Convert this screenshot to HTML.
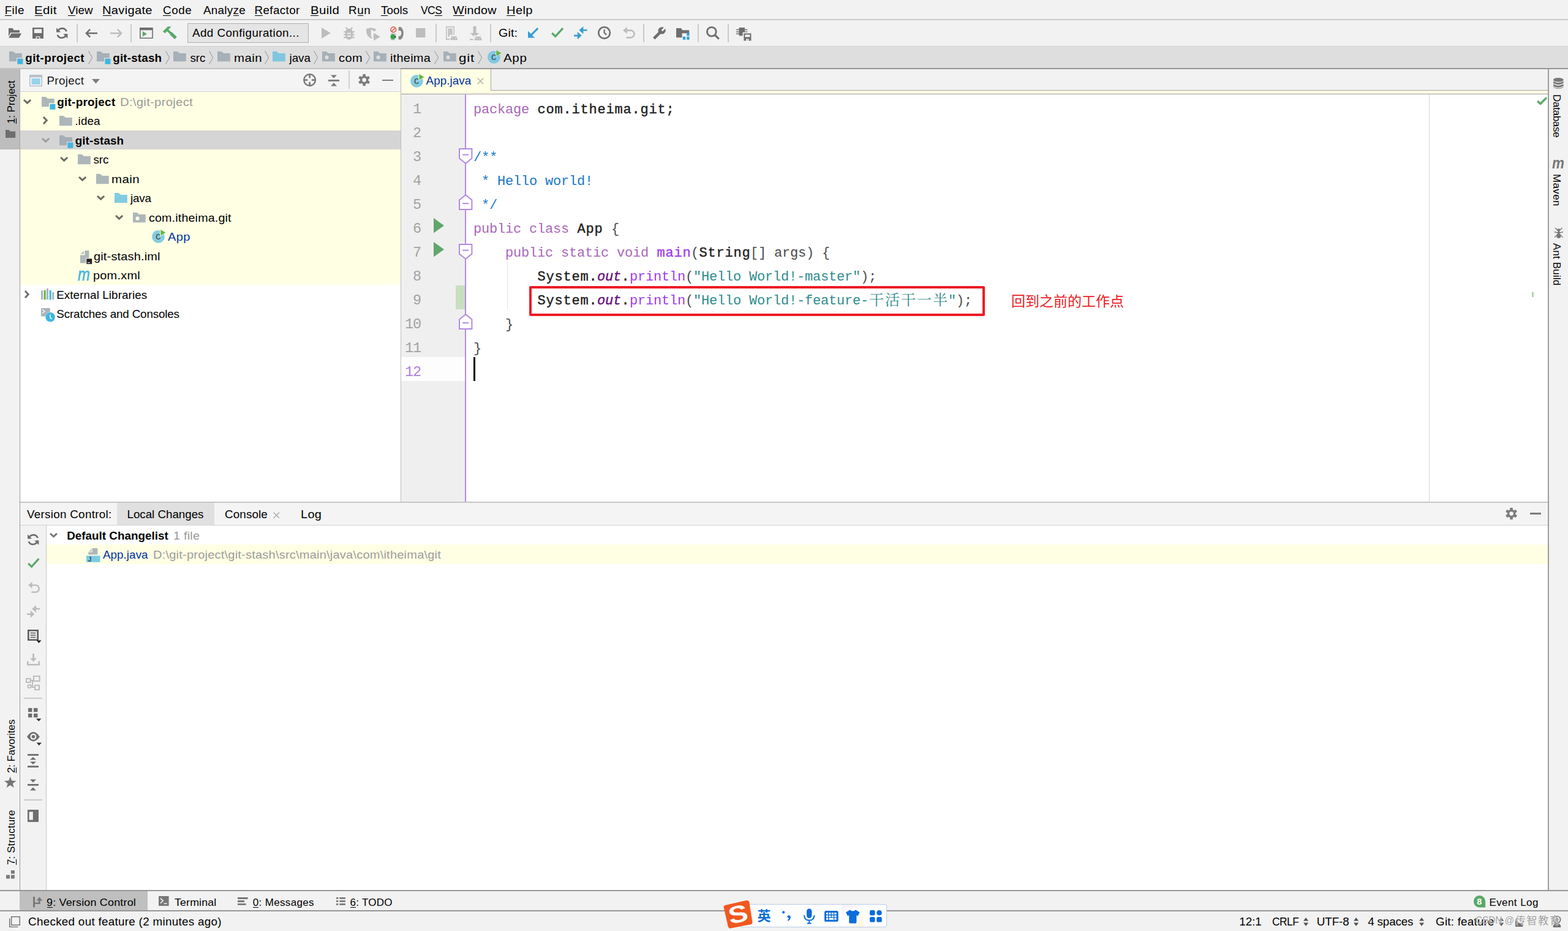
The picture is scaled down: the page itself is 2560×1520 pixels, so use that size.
<!DOCTYPE html>
<html lang="en"><head><meta charset="utf-8"><title>git-project - App.java - IntelliJ IDEA</title>
<style>
html,body{margin:0;padding:0}
body{width:2560px;height:1520px;position:relative;overflow:hidden;background:#f2f2f2;font-family:"Liberation Sans","Noto Sans CJK SC",sans-serif;font-size:19.5px;color:#000}
.a{position:absolute;display:block}
.t{position:absolute;white-space:pre;display:block}
</style></head>
<body>
<div class="a" style="left:0px;top:31px;width:2560px;height:2px;background:#cbcbcb;"></div>
<div class="a" style="left:0px;top:75px;width:2560px;height:36px;background:#dedede;"></div>
<div class="a" style="left:0px;top:75px;width:2560px;height:1px;background:#d3d3d3;"></div>
<div class="a" style="left:0px;top:111px;width:654px;height:1.6px;background:#c2c2c2;"></div>
<div class="a" style="left:654px;top:111px;width:1906px;height:1.6px;background:#969696;"></div>
<div class="a" style="left:0px;top:113px;width:32px;height:1340px;background:#f2f2f2;"></div>
<div class="a" style="left:0px;top:113px;width:32px;height:131px;background:#bdbdbd;"></div>
<div class="a" style="left:32px;top:113px;width:1px;height:1340px;background:#9a9a9a;"></div>
<div class="a" style="left:32px;top:113px;width:1px;height:131px;background:#a8a8a8;"></div>
<div class="a" style="left:33px;top:113px;width:621px;height:36px;background:#f4f4f4;"></div>
<div class="a" style="left:33px;top:149px;width:621px;height:1px;background:#d2d2d2;"></div>
<div class="a" style="left:33px;top:150px;width:621px;height:669px;background:#ffffff;"></div>
<div class="a" style="left:33px;top:150px;width:621px;height:315px;background:#ffffe4;"></div>
<div class="a" style="left:33px;top:213px;width:621px;height:31px;background:#d5d5d5;"></div>
<div class="a" style="left:654px;top:113px;width:1px;height:706px;background:#bdbdbd;"></div>
<div class="a" style="left:655px;top:113px;width:1872px;height:34px;background:#f2f2f2;"></div>
<div class="a" style="left:655px;top:147px;width:1872px;height:1px;background:#a4a4a4;"></div>
<div class="a" style="left:655px;top:148px;width:1872px;height:5px;background:#ffffe4;"></div>
<div class="a" style="left:655px;top:113px;width:146px;height:40px;background:#ffffe4;"></div>
<div class="a" style="left:801px;top:113px;width:1px;height:35px;background:#a6a6a6;"></div>
<div class="a" style="left:655px;top:153px;width:1872px;height:1px;background:#9e9e9e;"></div>
<div class="a" style="left:655px;top:154px;width:104px;height:665px;background:#efefef;"></div>
<div class="a" style="left:761px;top:154px;width:1766px;height:665px;background:#ffffff;"></div>
<div class="a" style="left:655px;top:583px;width:104px;height:39px;background:#fdfdfd;"></div>
<div class="a" style="left:759px;top:154px;width:2px;height:665px;background:#b389e3;"></div>
<div class="a" style="left:2333px;top:154px;width:1.4px;height:665px;background:#d3d3d3;"></div>
<div class="a" style="left:2527px;top:113px;width:2px;height:1340px;background:#9c9c9c;"></div>
<div class="a" style="left:2529px;top:113px;width:31px;height:1340px;background:#f2f2f2;"></div>
<div class="a" style="left:33px;top:819px;width:2494px;height:2px;background:#c6c6c6;"></div>
<div class="a" style="left:33px;top:821px;width:2494px;height:36px;background:#f4f4f4;"></div>
<div class="a" style="left:191px;top:821px;width:159px;height:36px;background:#e0e0e0;"></div>
<div class="a" style="left:33px;top:857px;width:2494px;height:1px;background:#d2d2d2;"></div>
<div class="a" style="left:33px;top:858px;width:42px;height:595px;background:#f2f2f2;"></div>
<div class="a" style="left:75px;top:858px;width:1px;height:595px;background:#c6c6c6;"></div>
<div class="a" style="left:76px;top:858px;width:2451px;height:595px;background:#ffffff;"></div>
<div class="a" style="left:76px;top:889px;width:2451px;height:32px;background:#ffffe4;"></div>
<div class="a" style="left:0px;top:1453px;width:2560px;height:2px;background:#979797;"></div>
<div class="a" style="left:0px;top:1455px;width:2560px;height:31px;background:#f2f2f2;"></div>
<div class="a" style="left:32px;top:1455px;width:209px;height:31px;background:#bfbfbf;"></div>
<div class="a" style="left:0px;top:1486px;width:2560px;height:2px;background:#979797;"></div>
<div class="a" style="left:0px;top:1488px;width:2560px;height:32px;background:#f2f2f2;"></div>
<div class="a" style="left:7.96px;top:25px;width:10.88px;height:1px;background:#000"></div>
<span class="t" style="left:7.66px;top:4px;line-height:25px;font-size:18.8px;letter-spacing:0.49px;">File</span>
<div class="a" style="left:56.62px;top:25px;width:13.05px;height:1px;background:#000"></div>
<span class="t" style="left:56.32px;top:4px;line-height:25px;font-size:18.8px;letter-spacing:0.36px;transform-origin:0 0;transform:scaleX(1.089);">Edit</span>
<div class="a" style="left:111.22px;top:25px;width:11.94px;height:1px;background:#000"></div>
<span class="t" style="left:110.92px;top:4px;line-height:25px;font-size:18.8px;letter-spacing:0.1px;">View</span>
<div class="a" style="left:167.65px;top:25px;width:13.93px;height:1px;background:#000"></div>
<span class="t" style="left:167.35px;top:4px;line-height:25px;font-size:18.8px;letter-spacing:0.29px;transform-origin:0 0;transform:scaleX(1.070);">Navigate</span>
<div class="a" style="left:266.35px;top:25px;width:12.98px;height:1px;background:#000"></div>
<span class="t" style="left:266.05px;top:4px;line-height:25px;font-size:18.8px;letter-spacing:0.62px;">Code</span>
<div class="a" style="left:380.95px;top:25px;width:8.8px;height:1px;background:#000"></div>
<span class="t" style="left:331.96px;top:4px;line-height:25px;font-size:18.8px;letter-spacing:0.33px;">Analyze</span>
<div class="a" style="left:415.76px;top:25px;width:12.98px;height:1px;background:#000"></div>
<span class="t" style="left:415.46px;top:4px;line-height:25px;font-size:18.8px;letter-spacing:0.4px;">Refactor</span>
<div class="a" style="left:507.23px;top:25px;width:13.01px;height:1px;background:#000"></div>
<span class="t" style="left:506.93px;top:4px;line-height:25px;font-size:18.8px;letter-spacing:0.33px;transform-origin:0 0;transform:scaleX(1.085);">Build</span>
<div class="a" style="left:583.57px;top:25px;width:9.86px;height:1px;background:#000"></div>
<span class="t" style="left:569.06px;top:4px;line-height:25px;font-size:18.8px;letter-spacing:0.64px;">Run</span>
<div class="a" style="left:622.28px;top:25px;width:10.88px;height:1px;background:#000"></div>
<span class="t" style="left:621.98px;top:4px;line-height:25px;font-size:18.8px;letter-spacing:0.08px;">Tools</span>
<div class="a" style="left:710.43px;top:25px;width:11.08px;height:1px;background:#000"></div>
<span class="t" style="left:686.92px;top:4px;line-height:25px;font-size:18.8px;letter-spacing:-0.6px;transform-origin:0 0;transform:scaleX(0.931);">VCS</span>
<div class="a" style="left:739.61px;top:25px;width:18.03px;height:1px;background:#000"></div>
<span class="t" style="left:739.31px;top:4px;line-height:25px;font-size:18.8px;letter-spacing:0.27px;transform-origin:0 0;transform:scaleX(1.050);">Window</span>
<div class="a" style="left:827.05px;top:25px;width:13.94px;height:1px;background:#000"></div>
<span class="t" style="left:826.75px;top:4px;line-height:25px;font-size:18.8px;letter-spacing:0.34px;transform-origin:0 0;transform:scaleX(1.071);">Help</span>
<div class="a" style="left:306px;top:38px;width:196px;height:30px;background:#e5e5e5;border:1px solid #b0b0b0;box-sizing:content-box"></div>
<span class="t" style="left:313.96px;top:41px;line-height:25px;font-size:18.8px;letter-spacing:0.45px;">Add Configuration...</span>
<span class="t" style="left:814.41px;top:41px;line-height:25px;font-size:18.8px;letter-spacing:0.15px;transform-origin:0 0;transform:scaleX(1.043);">Git:</span>
<div class="a" style="left:125px;top:39px;width:2px;height:30px;background:#cacaca;"></div>
<div class="a" style="left:213px;top:39px;width:2px;height:30px;background:#cacaca;"></div>
<div class="a" style="left:711px;top:39px;width:2px;height:30px;background:#cacaca;"></div>
<div class="a" style="left:800px;top:39px;width:2px;height:30px;background:#cacaca;"></div>
<div class="a" style="left:1050px;top:39px;width:2px;height:30px;background:#cacaca;"></div>
<div class="a" style="left:1139px;top:39px;width:2px;height:30px;background:#cacaca;"></div>
<div class="a" style="left:1188px;top:39px;width:2px;height:30px;background:#cacaca;"></div>
<span class="t" style="left:41.23px;top:82px;line-height:25px;font-size:18.8px;letter-spacing:0.45px;font-weight:700;">git-project</span>
<span class="t" style="left:184.23px;top:82px;line-height:25px;font-size:18.8px;letter-spacing:0.2px;font-weight:700;">git-stash</span>
<span class="t" style="left:310.48px;top:82px;line-height:25px;font-size:18.8px;letter-spacing:-0.02px;">src</span>
<span class="t" style="left:381.64px;top:82px;line-height:25px;font-size:18.8px;letter-spacing:0.43px;transform-origin:0 0;transform:scaleX(1.086);">main</span>
<span class="t" style="left:472.46px;top:82px;line-height:25px;font-size:18.8px;letter-spacing:0.02px;">java</span>
<span class="t" style="left:553.15px;top:82px;line-height:25px;font-size:18.8px;letter-spacing:0.43px;transform-origin:0 0;transform:scaleX(1.063);">com</span>
<span class="t" style="left:636.67px;top:82px;line-height:25px;font-size:18.8px;letter-spacing:0.24px;transform-origin:0 0;transform:scaleX(1.061);">itheima</span>
<span class="t" style="left:749.06px;top:82px;line-height:25px;font-size:18.8px;letter-spacing:0.64px;transform-origin:0 0;transform:scaleX(1.188);">git</span>
<span class="t" style="left:821.96px;top:82px;line-height:25px;font-size:18.8px;letter-spacing:0.6px;transform-origin:0 0;transform:scaleX(1.094);">App</span>
<svg class="a" style="left:144px;top:83px;" width="8" height="22" viewBox="0 0 8 22"><path d="M0.5 0.3 L6.6 11 L0.5 21.7" fill="none" stroke="#a0a7ad" stroke-width="1.2"/></svg>
<svg class="a" style="left:270px;top:83px;" width="8" height="22" viewBox="0 0 8 22"><path d="M0.5 0.3 L6.6 11 L0.5 21.7" fill="none" stroke="#a0a7ad" stroke-width="1.2"/></svg>
<svg class="a" style="left:341.2px;top:83px;" width="8" height="22" viewBox="0 0 8 22"><path d="M0.5 0.3 L6.6 11 L0.5 21.7" fill="none" stroke="#a0a7ad" stroke-width="1.2"/></svg>
<svg class="a" style="left:431.6px;top:83px;" width="8" height="22" viewBox="0 0 8 22"><path d="M0.5 0.3 L6.6 11 L0.5 21.7" fill="none" stroke="#a0a7ad" stroke-width="1.2"/></svg>
<svg class="a" style="left:512.3px;top:83px;" width="8" height="22" viewBox="0 0 8 22"><path d="M0.5 0.3 L6.6 11 L0.5 21.7" fill="none" stroke="#a0a7ad" stroke-width="1.2"/></svg>
<svg class="a" style="left:596.6px;top:83px;" width="8" height="22" viewBox="0 0 8 22"><path d="M0.5 0.3 L6.6 11 L0.5 21.7" fill="none" stroke="#a0a7ad" stroke-width="1.2"/></svg>
<svg class="a" style="left:709px;top:83px;" width="8" height="22" viewBox="0 0 8 22"><path d="M0.5 0.3 L6.6 11 L0.5 21.7" fill="none" stroke="#a0a7ad" stroke-width="1.2"/></svg>
<svg class="a" style="left:780px;top:83px;" width="8" height="22" viewBox="0 0 8 22"><path d="M0.5 0.3 L6.6 11 L0.5 21.7" fill="none" stroke="#a0a7ad" stroke-width="1.2"/></svg>
<span class="t" style="left:76.46px;top:119px;line-height:25px;font-size:18.8px;letter-spacing:0.33px;color:#1a1a1a;">Project</span>
<span class="t" style="left:93.23px;top:154px;line-height:25px;font-size:18.8px;letter-spacing:0.31px;font-weight:700;">git-project</span>
<span class="t" style="left:196.33px;top:154px;line-height:25px;font-size:18.8px;letter-spacing:0.26px;color:#9a9a9a;transform-origin:0 0;transform:scaleX(1.081);">D:\git-project</span>
<span class="t" style="left:122.28px;top:185px;line-height:25px;font-size:18.8px;letter-spacing:0.11px;">.idea</span>
<span class="t" style="left:122.63px;top:217px;line-height:25px;font-size:18.8px;letter-spacing:0.15px;font-weight:700;">git-stash</span>
<span class="t" style="left:152.48px;top:248px;line-height:25px;font-size:18.8px;letter-spacing:-0.02px;">src</span>
<span class="t" style="left:181.64px;top:280px;line-height:25px;font-size:18.8px;letter-spacing:0.43px;transform-origin:0 0;transform:scaleX(1.086);">main</span>
<span class="t" style="left:212.96px;top:311px;line-height:25px;font-size:18.8px;letter-spacing:-0.15px;">java</span>
<span class="t" style="left:242.57px;top:343px;line-height:25px;font-size:18.8px;letter-spacing:0.17px;transform-origin:0 0;transform:scaleX(1.045);">com.itheima.git</span>
<span class="t" style="left:273.76px;top:374px;line-height:25px;font-size:18.8px;letter-spacing:0.42px;color:#0032a0;transform-origin:0 0;transform:scaleX(1.064);">App</span>
<span class="t" style="left:152.76px;top:406px;line-height:25px;font-size:18.8px;letter-spacing:0.19px;transform-origin:0 0;transform:scaleX(1.058);">git-stash.iml</span>
<span class="t" style="left:152.32px;top:437px;line-height:25px;font-size:18.8px;letter-spacing:0.26px;transform-origin:0 0;transform:scaleX(1.056);">pom.xml</span>
<span class="t" style="left:92.16px;top:469px;line-height:25px;font-size:18.8px;letter-spacing:0.11px;">External Libraries</span>
<span class="t" style="left:92.35px;top:500px;line-height:25px;font-size:18.8px;letter-spacing:-0.14px;">Scratches and Consoles</span>
<span class="t" style="left:695.56px;top:119px;line-height:25px;font-size:18.8px;letter-spacing:0.07px;color:#0032a0;">App.java</span>
<span class="t" style="left:673.95px;top:158.5px;line-height:40px;font-size:23.5px;letter-spacing:-1.1px;color:#a3a3a3;font-family:'Liberation Mono','Noto Serif CJK SC',monospace;">1</span>
<span class="t" style="left:673.95px;top:197.5px;line-height:40px;font-size:23.5px;letter-spacing:-1.1px;color:#a3a3a3;font-family:'Liberation Mono','Noto Serif CJK SC',monospace;">2</span>
<span class="t" style="left:673.95px;top:236.5px;line-height:40px;font-size:23.5px;letter-spacing:-1.1px;color:#a3a3a3;font-family:'Liberation Mono','Noto Serif CJK SC',monospace;">3</span>
<span class="t" style="left:673.95px;top:275.5px;line-height:40px;font-size:23.5px;letter-spacing:-1.1px;color:#a3a3a3;font-family:'Liberation Mono','Noto Serif CJK SC',monospace;">4</span>
<span class="t" style="left:673.95px;top:314.5px;line-height:40px;font-size:23.5px;letter-spacing:-1.1px;color:#a3a3a3;font-family:'Liberation Mono','Noto Serif CJK SC',monospace;">5</span>
<span class="t" style="left:673.95px;top:353.5px;line-height:40px;font-size:23.5px;letter-spacing:-1.1px;color:#a3a3a3;font-family:'Liberation Mono','Noto Serif CJK SC',monospace;">6</span>
<span class="t" style="left:673.95px;top:392.5px;line-height:40px;font-size:23.5px;letter-spacing:-1.1px;color:#a3a3a3;font-family:'Liberation Mono','Noto Serif CJK SC',monospace;">7</span>
<span class="t" style="left:673.95px;top:431.5px;line-height:40px;font-size:23.5px;letter-spacing:-1.1px;color:#a3a3a3;font-family:'Liberation Mono','Noto Serif CJK SC',monospace;">8</span>
<span class="t" style="left:673.95px;top:470.5px;line-height:40px;font-size:23.5px;letter-spacing:-1.1px;color:#a3a3a3;font-family:'Liberation Mono','Noto Serif CJK SC',monospace;">9</span>
<span class="t" style="left:660.95px;top:509.5px;line-height:40px;font-size:23.5px;letter-spacing:-1.1px;color:#a3a3a3;font-family:'Liberation Mono','Noto Serif CJK SC',monospace;">10</span>
<span class="t" style="left:660.95px;top:548.5px;line-height:40px;font-size:23.5px;letter-spacing:-1.1px;color:#a3a3a3;font-family:'Liberation Mono','Noto Serif CJK SC',monospace;">11</span>
<span class="t" style="left:660.95px;top:587.5px;line-height:40px;font-size:23.5px;letter-spacing:-1.1px;color:#b181e4;font-family:'Liberation Mono','Noto Serif CJK SC',monospace;">12</span>
<span class="t" style="left:772.9px;top:160px;line-height:39px;font-size:22px;letter-spacing:-0.2px;color:#a868b7;font-family:'Liberation Mono','Noto Serif CJK SC',monospace;">package </span>
<span class="t" style="left:877.4px;top:160px;line-height:39px;font-size:22px;letter-spacing:0.8px;color:#202020;font-family:'Liberation Mono','Noto Serif CJK SC',monospace;-webkit-text-stroke:0.4px #202020;">com.itheima.git;</span>
<span class="t" style="left:772.9px;top:238px;line-height:39px;font-size:22px;letter-spacing:-0.2px;color:#1a78c8;font-family:'Liberation Mono','Noto Serif CJK SC',monospace;">/**</span>
<span class="t" style="left:772.9px;top:277px;line-height:39px;font-size:22px;letter-spacing:-0.2px;color:#1a78c8;font-family:'Liberation Mono','Noto Serif CJK SC',monospace;"> * Hello world!</span>
<span class="t" style="left:772.9px;top:316px;line-height:39px;font-size:22px;letter-spacing:-0.2px;color:#1a78c8;font-family:'Liberation Mono','Noto Serif CJK SC',monospace;"> */</span>
<span class="t" style="left:772.9px;top:355px;line-height:39px;font-size:22px;letter-spacing:-0.2px;color:#a868b7;font-family:'Liberation Mono','Noto Serif CJK SC',monospace;">public class </span>
<span class="t" style="left:942.4px;top:355px;line-height:39px;font-size:22px;letter-spacing:0.8px;color:#202020;font-family:'Liberation Mono','Noto Serif CJK SC',monospace;-webkit-text-stroke:0.4px #202020;">App </span>
<span class="t" style="left:997.9px;top:355px;line-height:39px;font-size:22px;letter-spacing:-0.2px;color:#4a4a4a;font-family:'Liberation Mono','Noto Serif CJK SC',monospace;">{</span>
<span class="t" style="left:772.9px;top:394px;line-height:39px;font-size:22px;letter-spacing:-0.2px;color:#a868b7;font-family:'Liberation Mono','Noto Serif CJK SC',monospace;">    public static void </span>
<span class="t" style="left:1072.4px;top:394px;line-height:39px;font-size:22px;letter-spacing:0.8px;color:#a13cf0;font-family:'Liberation Mono','Noto Serif CJK SC',monospace;-webkit-text-stroke:0.4px #a13cf0;">main</span>
<span class="t" style="left:1127.9px;top:394px;line-height:39px;font-size:22px;letter-spacing:-0.2px;color:#4a4a4a;font-family:'Liberation Mono','Noto Serif CJK SC',monospace;">(</span>
<span class="t" style="left:1141.4px;top:394px;line-height:39px;font-size:22px;letter-spacing:0.8px;color:#202020;font-family:'Liberation Mono','Noto Serif CJK SC',monospace;-webkit-text-stroke:0.4px #202020;">String</span>
<span class="t" style="left:1224.9px;top:394px;line-height:39px;font-size:22px;letter-spacing:-0.2px;color:#4a4a4a;font-family:'Liberation Mono','Noto Serif CJK SC',monospace;">[] </span>
<span class="t" style="left:1263.9px;top:394px;line-height:39px;font-size:22px;letter-spacing:-0.2px;color:#4a4a4a;font-family:'Liberation Mono','Noto Serif CJK SC',monospace;">args</span>
<span class="t" style="left:1315.9px;top:394px;line-height:39px;font-size:22px;letter-spacing:-0.2px;color:#4a4a4a;font-family:'Liberation Mono','Noto Serif CJK SC',monospace;">) {</span>
<span class="t" style="left:772.9px;top:433px;line-height:39px;font-size:22px;letter-spacing:-0.2px;color:#a868b7;font-family:'Liberation Mono','Noto Serif CJK SC',monospace;">        </span>
<span class="t" style="left:877.4px;top:433px;line-height:39px;font-size:22px;letter-spacing:0.8px;color:#202020;font-family:'Liberation Mono','Noto Serif CJK SC',monospace;-webkit-text-stroke:0.4px #202020;">System.</span>
<span class="t" style="left:974.9px;top:433px;line-height:39px;font-size:22px;letter-spacing:-0.2px;color:#660e7a;font-style:italic;font-family:'Liberation Mono','Noto Serif CJK SC',monospace;-webkit-text-stroke:0.4px #660e7a;">out</span>
<span class="t" style="left:1014.4px;top:433px;line-height:39px;font-size:22px;letter-spacing:0.8px;color:#202020;font-family:'Liberation Mono','Noto Serif CJK SC',monospace;-webkit-text-stroke:0.4px #202020;">.</span>
<span class="t" style="left:1027.9px;top:433px;line-height:39px;font-size:22px;letter-spacing:-0.2px;color:#a13cf0;font-family:'Liberation Mono','Noto Serif CJK SC',monospace;">println</span>
<span class="t" style="left:1118.9px;top:433px;line-height:39px;font-size:22px;letter-spacing:-0.2px;color:#4a4a4a;font-family:'Liberation Mono','Noto Serif CJK SC',monospace;">(</span>
<span class="t" style="left:1131.9px;top:433px;line-height:39px;font-size:22px;letter-spacing:-0.2px;color:#2f8c8c;font-family:'Liberation Mono','Noto Serif CJK SC',monospace;">&quot;Hello World!-master&quot;</span>
<span class="t" style="left:1404.9px;top:433px;line-height:39px;font-size:22px;letter-spacing:-0.2px;color:#4a4a4a;font-family:'Liberation Mono','Noto Serif CJK SC',monospace;">);</span>
<span class="t" style="left:772.9px;top:472px;line-height:39px;font-size:22px;letter-spacing:-0.2px;color:#a868b7;font-family:'Liberation Mono','Noto Serif CJK SC',monospace;">        </span>
<span class="t" style="left:877.4px;top:472px;line-height:39px;font-size:22px;letter-spacing:0.8px;color:#202020;font-family:'Liberation Mono','Noto Serif CJK SC',monospace;-webkit-text-stroke:0.4px #202020;">System.</span>
<span class="t" style="left:974.9px;top:472px;line-height:39px;font-size:22px;letter-spacing:-0.2px;color:#660e7a;font-style:italic;font-family:'Liberation Mono','Noto Serif CJK SC',monospace;-webkit-text-stroke:0.4px #660e7a;">out</span>
<span class="t" style="left:1014.4px;top:472px;line-height:39px;font-size:22px;letter-spacing:0.8px;color:#202020;font-family:'Liberation Mono','Noto Serif CJK SC',monospace;-webkit-text-stroke:0.4px #202020;">.</span>
<span class="t" style="left:1027.9px;top:472px;line-height:39px;font-size:22px;letter-spacing:-0.2px;color:#a13cf0;font-family:'Liberation Mono','Noto Serif CJK SC',monospace;">println</span>
<span class="t" style="left:1118.9px;top:472px;line-height:39px;font-size:22px;letter-spacing:-0.2px;color:#4a4a4a;font-family:'Liberation Mono','Noto Serif CJK SC',monospace;">(</span>
<span class="t" style="left:1131.9px;top:472px;line-height:39px;font-size:22px;letter-spacing:-0.2px;color:#2f8c8c;font-family:'Liberation Mono','Noto Serif CJK SC',monospace;">&quot;Hello World!-feature-</span>
<span class="t" style="left:1419px;top:472px;line-height:39px;font-size:24px;letter-spacing:2px;color:#2f8c8c;font-family:'Liberation Mono','Noto Serif CJK SC',monospace;">干活干一半</span>
<span class="t" style="left:1547.9px;top:472px;line-height:39px;font-size:22px;letter-spacing:-0.2px;color:#2f8c8c;font-family:'Liberation Mono','Noto Serif CJK SC',monospace;">&quot;</span>
<span class="t" style="left:1560.9px;top:472px;line-height:39px;font-size:22px;letter-spacing:-0.2px;color:#4a4a4a;font-family:'Liberation Mono','Noto Serif CJK SC',monospace;">);</span>
<span class="t" style="left:772.9px;top:511px;line-height:39px;font-size:22px;letter-spacing:-0.2px;color:#4a4a4a;font-family:'Liberation Mono','Noto Serif CJK SC',monospace;">    }</span>
<span class="t" style="left:772.9px;top:550px;line-height:39px;font-size:22px;letter-spacing:-0.2px;color:#4a4a4a;font-family:'Liberation Mono','Noto Serif CJK SC',monospace;">}</span>
<div class="a" style="left:773px;top:583px;width:3px;height:39px;background:#000;"></div>
<div class="a" style="left:828px;top:427px;width:1px;height:78px;background:#e2e2e2;"></div>
<div class="a" style="left:744px;top:466px;width:15px;height:39px;background:#c9dec1;"></div>
<div class="a" style="left:864px;top:467px;width:736px;height:41.2px;border:4px solid #ed1c24;border-radius:2.5px"></div>
<span class="t" style="left:1651px;top:477px;line-height:30px;font-size:23px;color:#ed1c24;">回到之前的工作点</span>
<div class="a" style="left:2501px;top:477px;width:3px;height:8px;background:#a9dba0;"></div>
<span class="t" style="left:43.92px;top:827px;line-height:25px;font-size:18.8px;letter-spacing:0.31px;">Version Control:</span>
<span class="t" style="left:207.46px;top:827px;line-height:25px;font-size:18.8px;letter-spacing:-0.02px;">Local Changes</span>
<span class="t" style="left:367.05px;top:827px;line-height:25px;font-size:18.8px;letter-spacing:0.14px;">Console</span>
<span class="t" style="left:490.87px;top:827px;line-height:25px;font-size:18.8px;letter-spacing:0.34px;transform-origin:0 0;transform:scaleX(1.058);">Log</span>
<span class="t" style="left:109.14px;top:862px;line-height:25px;font-size:18.8px;letter-spacing:0.04px;font-weight:700;">Default Changelist</span>
<span class="t" style="left:282.88px;top:862px;line-height:25px;font-size:18.8px;letter-spacing:0.18px;color:#999;transform-origin:0 0;transform:scaleX(1.059);">1 file</span>
<span class="t" style="left:167.96px;top:893px;line-height:25px;font-size:18.8px;letter-spacing:0.07px;color:#0032a0;">App.java</span>
<span class="t" style="left:250.36px;top:893px;line-height:25px;font-size:18.8px;letter-spacing:0.21px;color:#9c9c9c;transform-origin:0 0;transform:scaleX(1.065);">D:\git-project\git-stash\src\main\java\com\itheima\git</span>
<div class="a" style="left:76.66px;top:1481px;width:9.37px;height:1px;background:#000"></div>
<span class="t" style="left:76.36px;top:1462px;line-height:23px;font-size:17px;letter-spacing:0.18px;transform-origin:0 0;transform:scaleX(1.055);">9: Version Control</span>
<span class="t" style="left:284.5px;top:1462px;line-height:23px;font-size:17px;letter-spacing:0.16px;transform-origin:0 0;transform:scaleX(1.043);">Terminal</span>
<div class="a" style="left:413.04px;top:1481px;width:8.85px;height:1px;background:#000"></div>
<span class="t" style="left:412.74px;top:1462px;line-height:23px;font-size:17px;letter-spacing:0.35px;">0: Messages</span>
<div class="a" style="left:571.74px;top:1481px;width:8.85px;height:1px;background:#000"></div>
<span class="t" style="left:571.44px;top:1462px;line-height:23px;font-size:17px;letter-spacing:0.29px;">6: TODO</span>
<span class="t" style="left:2431.41px;top:1462px;line-height:23px;font-size:17px;letter-spacing:0.43px;">Event Log</span>
<span class="t" style="left:46.05px;top:1492px;line-height:25px;font-size:18.8px;letter-spacing:0.31px;">Checked out feature (2 minutes ago)</span>
<span class="t" style="left:2023.37px;top:1492px;line-height:25px;font-size:18.8px;letter-spacing:-0.05px;">12:1</span>
<span class="t" style="left:2077.12px;top:1492px;line-height:25px;font-size:18.8px;letter-spacing:-0.55px;transform-origin:0 0;transform:scaleX(0.925);">CRLF</span>
<span class="t" style="left:2149.85px;top:1492px;line-height:25px;font-size:18.8px;letter-spacing:-0.1px;">UTF-8</span>
<span class="t" style="left:2233.17px;top:1492px;line-height:25px;font-size:18.8px;letter-spacing:-0.13px;">4 spaces</span>
<span class="t" style="left:2344.05px;top:1492px;line-height:25px;font-size:18.8px;letter-spacing:0.23px;">Git: feature</span>
<div class="a" style="left:26.02px;top:193.14px;width:1px;height:8.85px;background:#000"></div>
<span class="t" style="left:7.02px;top:202.29px;line-height:23px;font-size:17px;letter-spacing:-0.13px;transform-origin:0 0;transform:rotate(-90deg);">1: Project</span>
<div class="a" style="left:26.02px;top:1253.3px;width:1px;height:8.85px;background:#000"></div>
<span class="t" style="left:7.02px;top:1262.45px;line-height:23px;font-size:17px;letter-spacing:-0.13px;transform-origin:0 0;transform:rotate(-90deg);">2: Favorites</span>
<div class="a" style="left:26.02px;top:1403.22px;width:1px;height:8.85px;background:#000"></div>
<span class="t" style="left:7.02px;top:1412.37px;line-height:23px;font-size:17px;letter-spacing:0.15px;transform-origin:0 0;transform:rotate(-90deg);">7: Structure</span>
<span class="t" style="left:2553.48px;top:153.61px;line-height:23px;font-size:17px;letter-spacing:-0.3px;transform-origin:0 0;transform:rotate(90deg);">Database</span>
<span class="t" style="left:2553.48px;top:283.61px;line-height:23px;font-size:17px;letter-spacing:0.37px;transform-origin:0 0;transform:rotate(90deg);">Maven</span>
<span class="t" style="left:2553.48px;top:396.97px;line-height:23px;font-size:17px;letter-spacing:0.14px;transform-origin:0 0;transform:rotate(90deg);">Ant Build</span>
<svg class="a" style="left:13.8px;top:46px;overflow:visible;" width="21.2" height="15.8" viewBox="0 0 21.2 15.8"><path fill="#6e6e6e" d="M0 0H6.6L8.6 3.2H18V7.2H3.2L0 13.4Z"/><path fill="#6e6e6e" d="M4.6 8.6H21.2L17 15.8H0.2Z"/></svg>
<svg class="a" style="left:53px;top:45px;overflow:visible;" width="18" height="18" viewBox="0 0 18 18"><path fill="#6e6e6e" fill-rule="evenodd" d="M0 0H18V18H0ZM2.8 2.6V9H15.2V2.6ZM5.6 14.6V18H12.4V14.6Z"/><rect x="6.9" y="15.8" width="4.2" height="2.2" fill="#6e6e6e"/></svg>
<svg class="a" style="left:91.8px;top:44.8px;overflow:visible;" width="18.4" height="18.2" viewBox="0 0 18.4 18.2"><g transform="scale(1)"><path fill="none" stroke="#6e6e6e" stroke-width="2.7" d="M1.9 7.6A7.7 7.7 0 0 1 16.6 6.2"/><path fill="none" stroke="#6e6e6e" stroke-width="2.7" d="M16.5 10.6A7.7 7.7 0 0 1 1.8 12"/><path fill="#6e6e6e" d="M0 0.4V7.6H7.2Z"/><path fill="#6e6e6e" d="M18.4 17.8V10.6H11.2Z"/></g></svg>
<svg class="a" style="left:139.2px;top:47px;overflow:visible;" width="20" height="14.4" viewBox="0 0 20 14.4"><path fill="none" stroke="#6e6e6e" stroke-width="2.5" d="M1.8 7.2H20M8.2 0.8L1.8 7.2L8.2 13.6"/></svg>
<svg class="a" style="left:179.6px;top:47px;overflow:visible;" width="20" height="14.4" viewBox="0 0 20 14.4"><g transform="translate(20,0) scale(-1,1)"><path fill="none" stroke="#bdbdbd" stroke-width="2.5" d="M1.8 7.2H20M8.2 0.8L1.8 7.2L8.2 13.6"/></g></svg>
<svg class="a" style="left:228px;top:45px;overflow:visible;" width="21.8" height="18" viewBox="0 0 21.8 18"><path fill="#6e6e6e" fill-rule="evenodd" d="M0 0H21.8V18H0ZM1.6 4.2V16.4H20.2V4.2Z"/><path fill="#59a869" d="M4.8 6V14.8L12 10.4Z"/></svg>
<svg class="a" style="left:266px;top:43.4px;overflow:visible;" width="23" height="20.8" viewBox="0 0 23 20.8"><path fill="#59a869" d="M-0.1 8.2L3.4 11.6L6.5 8L11.5 12.6L11.4 13.6L19.1 20.9L22.8 17.2L14.6 9.4L13 9L9 5.2L13.5 0.6Q11 -0.1 7.9 0.4Z"/></svg>
<svg class="a" style="left:524.8px;top:45px;overflow:visible;" width="14.8" height="18" viewBox="0 0 14.8 18"><path fill="#bdbdbd" d="M0 0L14.8 9L0 18Z"/></svg>
<svg class="a" style="left:561px;top:43.8px;overflow:visible;" width="18" height="20.8" viewBox="0 0 18 20.8"><path fill="none" stroke="#bdbdbd" stroke-width="2" d="M3.6 0.6L7.4 4.6M14.4 0.6L10.6 4.6M0 8H18M0 12.6H18M0 17.2H18"/><path fill="#bdbdbd" d="M9 2.8C13.6 2.8 15.2 6 15.2 11.6C15.2 17.4 13 20.8 9 20.8C5 20.8 2.8 17.4 2.8 11.6C2.8 6 4.4 2.8 9 2.8Z"/><rect x="6" y="9.6" width="6" height="1.9" fill="#f2f2f2"/><rect x="6" y="14" width="6" height="1.9" fill="#f2f2f2"/></svg>
<svg class="a" style="left:598.2px;top:44.6px;overflow:visible;" width="22.8" height="21.4" viewBox="0 0 22.8 21.4"><path fill="#bdbdbd" d="M0.2 2L7.8 0.3V17.9Q1.4 14.4 0.2 8Z"/><path fill="#bdbdbd" d="M7.8 0.3L15.3 2V5.8H10.7V3.7H7.8Z"/><path fill="#bdbdbd" d="M7.8 17.9Q10.2 16.6 11.2 14.4L10.7 13V15.6H7.8Z"/><path fill="#bdbdbd" d="M12 8.4L22.7 14.9L12 21.4Z"/></svg>
<svg class="a" style="left:636.6px;top:42.6px;overflow:visible;" width="22.2" height="22.4" viewBox="0 0 22.2 22.4"><circle cx="5.3" cy="5.3" r="4.3" fill="#f4fafa" stroke="#e0584c" stroke-width="1.6"/><path d="M2.4 8.3L8.3 2.4" stroke="#e0584c" stroke-width="1.6"/><path fill="none" stroke="#555" stroke-width="0.9" d="M1.4 11.6L2.8 13.4M4.4 11.2V13M7.4 11.6L6.2 13.4M1.4 22.4L2.8 20.6M4.4 22.6V21M7.4 22.4L6.2 20.6M9.6 13.4L8.2 14.6M9.6 19.4L8.2 18.4"/><ellipse cx="4.4" cy="17" rx="4" ry="4" fill="#30a746"/><path fill="#4c4c4c" d="M7.2 14.6L10 17L7.2 19.4Z"/><path fill="#888" d="M13.6 1H17.4Q21.8 4.6 21.8 11.2Q21.8 17.8 17.4 21.6H13.6V16.6L16.6 15.4Q18.4 14.2 18.4 11.2Q18.4 8.2 16.6 7L13.6 7Z"/></svg>
<svg class="a" style="left:679.2px;top:46.4px;overflow:visible;" width="15.4" height="15.2" viewBox="0 0 15.4 15.2"><rect width="15.4" height="15.2" fill="#bdbdbd"/></svg>
<svg class="a" style="left:727.8px;top:43px;overflow:visible;" width="19.2" height="22" viewBox="0 0 19.2 22"><path fill="#bdbdbd" fill-rule="evenodd" d="M0 0H14V22H0ZM1.4 1.6V20.4H12.6V1.6Z"/><rect x="3.2" y="3.4" width="7.6" height="13.6" fill="#c6c6c6"/><rect x="6" y="14" width="14" height="9" fill="#f2f2f2"/><rect x="0" y="20.4" width="6" height="1.6" fill="#bdbdbd"/><g transform="translate(7,15.4) scale(1.05)"><path fill="#bdbdbd" d="M0 6.6A5.8 5.8 0 0 1 11.6 6.6Z"/><path stroke="#bdbdbd" stroke-width="1" d="M2 0L3.6 2.4M9.6 0L8 2.4"/><circle cx="3.6" cy="4" r="0.7" fill="#f2f2f2"/><circle cx="8" cy="4" r="0.7" fill="#f2f2f2"/></g></svg>
<svg class="a" style="left:766.8px;top:42.6px;overflow:visible;" width="19.8" height="22.4" viewBox="0 0 19.8 22.4"><path fill="#bdbdbd" d="M5.6 0H10.4V11H15.2L8 18.6L0.8 11H5.6Z"/><rect x="6.6" y="14.4" width="14" height="9" fill="#f2f2f2"/><rect x="0" y="20.4" width="5.4" height="2" fill="#bdbdbd"/><g transform="translate(7.4,15.6) scale(1.07)"><path fill="#bdbdbd" d="M0 6.6A5.8 5.8 0 0 1 11.6 6.6Z"/><path stroke="#bdbdbd" stroke-width="1" d="M2 0L3.6 2.4M9.6 0L8 2.4"/><circle cx="3.6" cy="4" r="0.7" fill="#f2f2f2"/><circle cx="8" cy="4" r="0.7" fill="#f2f2f2"/></g></svg>
<svg class="a" style="left:861.8px;top:45px;overflow:visible;" width="17.2" height="16.8" viewBox="0 0 17.2 16.8"><path stroke="#389fd6" stroke-width="3.1" d="M16.2 1.2L4 13.4"/><path fill="#389fd6" d="M0 5.6L11.2 16.8H0Z"/></svg>
<svg class="a" style="left:900px;top:45px;overflow:visible;" width="20.2" height="16.6" viewBox="0 0 20.2 16.6"><g transform="scale(1,1)"><path fill="none" stroke="#59a869" stroke-width="3.3" d="M1.2 9L6.8 14.4L19 1.2"/></g></svg>
<svg class="a" style="left:937.2px;top:43.4px;overflow:visible;" width="21.6" height="21.2" viewBox="0 0 21.6 21.2"><path fill="#389fd6" d="M8.4 6.2L15.4 0V4.9H21.6V7.5H15.4V12.4Z"/><path fill="#389fd6" d="M12.8 15.1L5.8 8.9V13.8H0V16.4H5.8V21.2Z"/></svg>
<svg class="a" style="left:976.2px;top:43.4px;overflow:visible;" width="21.2" height="21.2" viewBox="0 0 21.2 21.2"><circle cx="10.6" cy="10.6" r="9.3" fill="none" stroke="#6e6e6e" stroke-width="2.6"/><path fill="none" stroke="#6e6e6e" stroke-width="2.2" d="M10.6 5V10.8L14.4 13.6"/></svg>
<svg class="a" style="left:1017px;top:44.2px;overflow:visible;" width="19.6" height="18.8" viewBox="0 0 19.6 18.8"><path fill="#bdbdbd" d="M0 5.6L6.8 0V11.2Z"/><path fill="none" stroke="#bdbdbd" stroke-width="2.6" d="M6 5.6H12.6A5.9 5.9 0 0 1 12.6 17.4H5.6"/></svg>
<svg class="a" style="left:1066px;top:43.6px;overflow:visible;" width="20.8" height="20.4" viewBox="0 0 20.8 20.4"><path stroke="#6e6e6e" stroke-width="4.6" d="M1.6 18.8L12.4 8.2"/><path fill="#6e6e6e" d="M14.4 0.2Q16.6 0 18 0.8L13.6 5.2L15.6 7.2L20.2 2.8Q21.2 5 20.4 7.4Q18.6 11.8 13.8 11.6Q10.4 11.6 9 8.4Q7.6 5 10.2 2Q12 0.4 14.4 0.2Z"/></svg>
<svg class="a" style="left:1104.2px;top:46.2px;overflow:visible;" width="21.6" height="18.8" viewBox="0 0 21.6 18.8"><path fill="#6e6e6e" d="M0 0H8L10.2 3.2H21.2V8.2H9.6V15.2H0Z"/><rect x="17.2" y="7.6" width="4.4" height="4.8" fill="#389fd6"/><rect x="10.8" y="13.8" width="4.4" height="5" fill="#389fd6"/><rect x="17.2" y="13.8" width="4.4" height="5" fill="#389fd6"/></svg>
<svg class="a" style="left:1153.2px;top:43.4px;overflow:visible;" width="21.8" height="21.2" viewBox="0 0 21.8 21.2"><g transform="scale(1)"><circle cx="8.8" cy="8.8" r="7.4" fill="none" stroke="#6e6e6e" stroke-width="2.8"/><path stroke="#6e6e6e" stroke-width="3.2" d="M14 14L20.8 20.6"/></g></svg>
<svg class="a" style="left:1201.8px;top:44.8px;overflow:visible;" width="24.4" height="21.4" viewBox="0 0 24.4 21.4"><rect x="4.6" y="0" width="9.4" height="13.4" fill="#6e6e6e"/><path stroke="#6e6e6e" stroke-width="1.5" d="M0 3.6H18.4M0 6.9H18.4M0 10.2H6"/><rect x="10.6" y="7.6" width="14.8" height="14.6" fill="#f2f2f2"/><path fill="#6e6e6e" fill-rule="evenodd" d="M12.4 9.4H24.4V21.4H12.4ZM14.4 11.4V15.6H22.4V11.4ZM16 18.6V21.4H20.8V18.6Z"/><rect x="17.4" y="19.8" width="2" height="1" fill="#6e6e6e"/></svg>
<svg class="a" style="left:15.3px;top:84.2px;overflow:visible;" width="22.4" height="20.8" viewBox="0 0 22.4 20.8"><path fill="#a5b0b8" d="M0 0H6.45L10.19 3.08H20.8V16.2H0Z"/><rect x="12" y="10.4" width="11" height="11" fill="#dedede"/><rect x="13.4" y="11.8" width="9" height="9" fill="#40b6e0"/></svg>
<svg class="a" style="left:157.6px;top:84.2px;overflow:visible;" width="22.4" height="20.8" viewBox="0 0 22.4 20.8"><path fill="#a5b0b8" d="M0 0H6.45L10.19 3.08H20.8V16.2H0Z"/><rect x="12" y="10.4" width="11" height="11" fill="#dedede"/><rect x="13.4" y="11.8" width="9" height="9" fill="#40b6e0"/></svg>
<svg class="a" style="left:283.4px;top:84.2px;overflow:visible;" width="20.8" height="16.2" viewBox="0 0 20.8 16.2"><path fill="#a5b0b8" d="M0 0H6.45L10.19 3.08H20.8V16.2H0Z"/></svg>
<svg class="a" style="left:355.4px;top:84.2px;overflow:visible;" width="20.8" height="16.2" viewBox="0 0 20.8 16.2"><path fill="#a5b0b8" d="M0 0H6.45L10.19 3.08H20.8V16.2H0Z"/></svg>
<svg class="a" style="left:445.4px;top:84.2px;overflow:visible;" width="20.8" height="16.2" viewBox="0 0 20.8 16.2"><path fill="#80c6e0" d="M0 0H6.45L10.19 3.08H20.8V16.2H0Z"/></svg>
<svg class="a" style="left:526.4px;top:84.2px;overflow:visible;" width="20.8" height="16.2" viewBox="0 0 20.8 16.2"><path fill="#a5b0b8" d="M0 0H6.45L10.19 3.08H20.8V16.2H0Z"/><circle cx="7.5" cy="9.7" r="3.1" fill="#dedede"/></svg>
<svg class="a" style="left:610.4px;top:84.2px;overflow:visible;" width="20.8" height="16.2" viewBox="0 0 20.8 16.2"><path fill="#a5b0b8" d="M0 0H6.45L10.19 3.08H20.8V16.2H0Z"/><circle cx="7.5" cy="9.7" r="3.1" fill="#dedede"/></svg>
<svg class="a" style="left:723.6px;top:84.2px;overflow:visible;" width="20.8" height="16.2" viewBox="0 0 20.8 16.2"><path fill="#a5b0b8" d="M0 0H6.45L10.19 3.08H20.8V16.2H0Z"/><circle cx="7.5" cy="9.7" r="3.1" fill="#dedede"/></svg>
<svg class="a" style="left:795.7px;top:82.6px;overflow:visible;" width="20.8" height="20.8" viewBox="0 0 20.8 20.8"><circle cx="10.4" cy="10.4" r="10.4" fill="#80c8e2"/><text x="10.1" y="14.7" text-anchor="middle" font-family="Liberation Sans,sans-serif" font-size="16.5" fill="#414d56">c</text><path fill="#dedede" d="M13.2 -2.4L23.6 3.8L13.2 10Z"/><path fill="#62b543" d="M14.3 -1.1L22.4 3.7L14.3 8.5Z"/></svg>
<svg class="a" style="left:48.4px;top:122.2px;overflow:visible;" width="21" height="19.2" viewBox="0 0 21 19.2"><rect width="21" height="19.2" fill="#b7c0c8"/><rect x="1.6" y="4.4" width="17.8" height="13.2" fill="#f6f8fa"/><rect x="3.4" y="6" width="14.4" height="10" fill="#96d3ec"/></svg>
<svg class="a" style="left:150px;top:129px;overflow:visible;" width="13" height="7.4" viewBox="0 0 13 7.4"><path fill="#7c7c7c" d="M0 0H13L6.5 7.4Z"/></svg>
<svg class="a" style="left:495.3px;top:120.3px;overflow:visible;" width="21.2" height="21.2" viewBox="0 0 21.2 21.2"><circle cx="10.6" cy="10.6" r="9.3" fill="none" stroke="#7c7c7c" stroke-width="2.5"/><path stroke="#7c7c7c" stroke-width="2.7" d="M10.6 1V7.4M10.6 13.8V20.2M1 10.6H7.4M13.8 10.6H20.2"/></svg>
<svg class="a" style="left:536px;top:121.6px;overflow:visible;" width="18" height="18.4" viewBox="0 0 18 18.4"><rect x="0" y="8" width="18" height="2.9" fill="#7c7c7c"/><path fill="#7c7c7c" d="M4 0.4H14L9 5.8ZM4 18.4H14L9 13Z"/></svg>
<div class="a" style="left:569px;top:115px;width:2px;height:30px;background:#d0d0d0;"></div>
<svg class="a" style="left:584.6px;top:121.2px;overflow:visible;" width="19.2" height="19.2" viewBox="0 0 19.2 19.2"><g transform="scale(1.03)"><rect x="7.1" y="0" width="4.4" height="18.6" rx="0.6" fill="#7c7c7c" transform="rotate(0 9.3 9.3)"/><rect x="7.1" y="0" width="4.4" height="18.6" rx="0.6" fill="#7c7c7c" transform="rotate(60 9.3 9.3)"/><rect x="7.1" y="0" width="4.4" height="18.6" rx="0.6" fill="#7c7c7c" transform="rotate(120 9.3 9.3)"/><circle cx="9.3" cy="9.3" r="6.6" fill="#7c7c7c"/></g><circle cx="9.6" cy="9.6" r="3.3" fill="#f4f4f4"/></svg>
<div class="a" style="left:624px;top:129.6px;width:18px;height:2.9px;background:#7c7c7c;"></div>
<svg class="a" style="left:38px;top:162px;overflow:visible;" width="13.2" height="8.2" viewBox="0 0 13.2 8.2"><path fill="none" stroke="#6b6b63" stroke-width="3" d="M1 1L6.6 6.2L12.2 1"/></svg>
<svg class="a" style="left:67.6px;top:158px;overflow:visible;" width="22.4" height="20.8" viewBox="0 0 22.4 20.8"><path fill="#adb7ba" d="M0 0H6.45L10.19 3.08H20.8V16.2H0Z"/><rect x="12" y="10.4" width="11" height="11" fill="#ffffe4"/><rect x="13.4" y="11.8" width="9" height="9" fill="#40b6e0"/></svg>
<svg class="a" style="left:69.6px;top:190.4px;overflow:visible;" width="8.2" height="13.2" viewBox="0 0 8.2 13.2"><path fill="none" stroke="#6b6b63" stroke-width="3" d="M1 1L6.2 6.6L1 12.2"/></svg>
<svg class="a" style="left:97.2px;top:189px;overflow:visible;" width="20.8" height="16.2" viewBox="0 0 20.8 16.2"><path fill="#adb7ba" d="M0 0H6.45L10.19 3.08H20.8V16.2H0Z"/></svg>
<svg class="a" style="left:68px;top:225px;overflow:visible;" width="13.2" height="8.2" viewBox="0 0 13.2 8.2"><path fill="none" stroke="#9c9c9c" stroke-width="3" d="M1 1L6.6 6.2L12.2 1"/></svg>
<svg class="a" style="left:97.2px;top:221px;overflow:visible;" width="22.4" height="20.8" viewBox="0 0 22.4 20.8"><path fill="#a3aeb6" d="M0 0H6.45L10.19 3.08H20.8V16.2H0Z"/><rect x="12" y="10.4" width="11" height="11" fill="#d5d5d5"/><rect x="13.4" y="11.8" width="9" height="9" fill="#40b6e0"/></svg>
<svg class="a" style="left:98px;top:256px;overflow:visible;" width="13.2" height="8.2" viewBox="0 0 13.2 8.2"><path fill="none" stroke="#6b6b63" stroke-width="3" d="M1 1L6.6 6.2L12.2 1"/></svg>
<svg class="a" style="left:127px;top:252px;overflow:visible;" width="20.8" height="16.2" viewBox="0 0 20.8 16.2"><path fill="#adb7ba" d="M0 0H6.45L10.19 3.08H20.8V16.2H0Z"/></svg>
<svg class="a" style="left:127.6px;top:288px;overflow:visible;" width="13.2" height="8.2" viewBox="0 0 13.2 8.2"><path fill="none" stroke="#6b6b63" stroke-width="3" d="M1 1L6.6 6.2L12.2 1"/></svg>
<svg class="a" style="left:157px;top:284px;overflow:visible;" width="20.8" height="16.2" viewBox="0 0 20.8 16.2"><path fill="#adb7ba" d="M0 0H6.45L10.19 3.08H20.8V16.2H0Z"/></svg>
<svg class="a" style="left:158px;top:319px;overflow:visible;" width="13.2" height="8.2" viewBox="0 0 13.2 8.2"><path fill="none" stroke="#6b6b63" stroke-width="3" d="M1 1L6.6 6.2L12.2 1"/></svg>
<svg class="a" style="left:187.4px;top:315px;overflow:visible;" width="20.8" height="16.2" viewBox="0 0 20.8 16.2"><path fill="#82cbe0" d="M0 0H6.45L10.19 3.08H20.8V16.2H0Z"/></svg>
<svg class="a" style="left:188px;top:351px;overflow:visible;" width="13.2" height="8.2" viewBox="0 0 13.2 8.2"><path fill="none" stroke="#6b6b63" stroke-width="3" d="M1 1L6.6 6.2L12.2 1"/></svg>
<svg class="a" style="left:217px;top:347px;overflow:visible;" width="20.8" height="16.2" viewBox="0 0 20.8 16.2"><path fill="#adb7ba" d="M0 0H6.45L10.19 3.08H20.8V16.2H0Z"/><circle cx="7.5" cy="9.7" r="3.1" fill="#ffffe4"/></svg>
<svg class="a" style="left:247.6px;top:376px;overflow:visible;" width="20.8" height="20.8" viewBox="0 0 20.8 20.8"><circle cx="10.4" cy="10.4" r="10.4" fill="#86cce0"/><text x="10.1" y="14.7" text-anchor="middle" font-family="Liberation Sans,sans-serif" font-size="16.5" fill="#414d56">c</text><path fill="#ffffe4" d="M13.2 -2.4L23.6 3.8L13.2 10Z"/><path fill="#62b543" d="M14.3 -1.1L22.4 3.7L14.3 8.5Z"/></svg>
<svg class="a" style="left:130.8px;top:408.7px;overflow:visible;" width="19.2" height="22.1" viewBox="0 0 19.2 22.1"><path fill="#adb7ba" d="M7.4 0H14.4V20.4H0V7.4H7.4Z"/><path fill="#b7c0c2" d="M0.4 5.8L5.8 0.4V5.8Z"/><rect x="9.3" y="12.4" width="11" height="10.6" fill="#ffffe4"/><rect x="10.3" y="13.4" width="8.9" height="8.7" fill="#231f20"/><rect x="11.8" y="19.2" width="4.4" height="1.3" fill="#e8e8e8"/></svg>
<span class="t" style="left:126.6px;top:432px;font-size:29.5px;line-height:32px;font-style:italic;font-weight:400;color:#45b5e0;-webkit-text-stroke:0.7px #45b5e0;transform-origin:0 50%;transform:scaleX(0.8)">m</span>
<svg class="a" style="left:39.7px;top:474.2px;overflow:visible;" width="8.2" height="13.2" viewBox="0 0 8.2 13.2"><path fill="none" stroke="#6e6e6e" stroke-width="3" d="M1 1L6.2 6.6L1 12.2"/></svg>
<svg class="a" style="left:67.4px;top:471.4px;overflow:visible;" width="21.2" height="18.4" viewBox="0 0 21.2 18.4"><rect x="0" y="3.4" width="3.1" height="14.6" fill="#aab4bc"/><rect x="4.6" y="2.8" width="3.1" height="15.6" fill="#62b543"/><rect x="8.9" y="0" width="3.1" height="18" fill="#aab4bc"/><rect x="13.6" y="2.8" width="3.1" height="15.6" fill="#40b6e0"/><rect x="18.2" y="6" width="3" height="12" fill="#aab4bc"/></svg>
<svg class="a" style="left:67.4px;top:502.6px;overflow:visible;" width="22.8" height="22.4" viewBox="0 0 22.8 22.4"><path fill="#aab4bc" d="M0 0H14.8V6.4Q8.6 7.4 7 13.4H0Z"/><path fill="none" stroke="#fff" stroke-width="1.4" d="M2 2.2L6 5.2L2 8.2"/><circle cx="15.1" cy="14.8" r="7.7" fill="#40b6e0"/><path fill="none" stroke="#fff" stroke-width="1.5" d="M14.8 10.4V15.2L17.6 18"/></svg>
<svg class="a" style="left:669.7px;top:121.7px;overflow:visible;" width="20.8" height="20.8" viewBox="0 0 20.8 20.8"><circle cx="10.4" cy="10.4" r="10.4" fill="#86cce0"/><text x="10.1" y="14.7" text-anchor="middle" font-family="Liberation Sans,sans-serif" font-size="16.5" fill="#414d56">c</text><path fill="#ffffe4" d="M13.2 -2.4L23.6 3.8L13.2 10Z"/><path fill="#62b543" d="M14.3 -1.1L22.4 3.7L14.3 8.5Z"/></svg>
<svg class="a" style="left:779px;top:126.5px;overflow:visible;" width="10.8" height="10.8" viewBox="0 0 10.8 10.8"><path stroke="#b4b9b4" stroke-width="1.5" d="M0.6 0.6L10.2 10.2M10.2 0.6L0.6 10.2"/></svg>
<svg class="a" style="left:749.2px;top:242px;overflow:visible;" width="22.4" height="26" viewBox="0 0 22.4 26"><path fill="#fff" stroke="#b389e3" stroke-width="2" d="M1 1H21.4V16.6L11.2 24.8L1 16.6Z"/><path stroke="#b389e3" stroke-width="2" d="M6.2 10.6H16.2"/></svg>
<svg class="a" style="left:749.2px;top:317px;overflow:visible;" width="22.4" height="26" viewBox="0 0 22.4 26"><path fill="#fff" stroke="#b389e3" stroke-width="2" d="M1 25H21.4V9.4L11.2 1.2L1 9.4Z"/><path stroke="#b389e3" stroke-width="2" d="M6.2 15.2H16.2"/></svg>
<svg class="a" style="left:749.2px;top:398px;overflow:visible;" width="22.4" height="26" viewBox="0 0 22.4 26"><path fill="#fff" stroke="#b389e3" stroke-width="2" d="M1 1H21.4V16.6L11.2 24.8L1 16.6Z"/><path stroke="#b389e3" stroke-width="2" d="M6.2 10.6H16.2"/></svg>
<svg class="a" style="left:749.2px;top:512px;overflow:visible;" width="22.4" height="26" viewBox="0 0 22.4 26"><path fill="#fff" stroke="#b389e3" stroke-width="2" d="M1 25H21.4V9.4L11.2 1.2L1 9.4Z"/><path stroke="#b389e3" stroke-width="2" d="M6.2 15.2H16.2"/></svg>
<svg class="a" style="left:708px;top:356px;overflow:visible;" width="17" height="24.6" viewBox="0 0 17 24.6"><path fill="#62a56d" d="M0 0L17 12.3L0 24.6Z"/></svg>
<svg class="a" style="left:708px;top:395.3px;overflow:visible;" width="17" height="24.6" viewBox="0 0 17 24.6"><path fill="#62a56d" d="M0 0L17 12.3L0 24.6Z"/></svg>
<svg class="a" style="left:2509px;top:158px;overflow:visible;" width="17" height="13.4" viewBox="0 0 17 13.4"><path fill="none" stroke="#59a869" stroke-width="3.4" d="M1.2 7L6 11.4L16 1.4"/></svg>
<svg class="a" style="left:2458.4px;top:829px;overflow:visible;" width="19.2" height="19.2" viewBox="0 0 19.2 19.2"><g transform="scale(1.03)"><rect x="7.1" y="0" width="4.4" height="18.6" rx="0.6" fill="#7c7c7c" transform="rotate(0 9.3 9.3)"/><rect x="7.1" y="0" width="4.4" height="18.6" rx="0.6" fill="#7c7c7c" transform="rotate(60 9.3 9.3)"/><rect x="7.1" y="0" width="4.4" height="18.6" rx="0.6" fill="#7c7c7c" transform="rotate(120 9.3 9.3)"/><circle cx="9.3" cy="9.3" r="6.6" fill="#7c7c7c"/></g><circle cx="9.6" cy="9.6" r="3.3" fill="#f4f4f4"/></svg>
<div class="a" style="left:2498px;top:837.4px;width:18px;height:2.9px;background:#7c7c7c;"></div>
<svg class="a" style="left:446px;top:836px;overflow:visible;" width="10.6" height="10.6" viewBox="0 0 10.6 10.6"><path stroke="#b0b0b0" stroke-width="1.5" d="M0.6 0.6L10 10M10 0.6L0.6 10"/></svg>
<svg class="a" style="left:81px;top:869.8px;overflow:visible;" width="13" height="8" viewBox="0 0 13 8"><path fill="none" stroke="#777" stroke-width="3" d="M1 1L6.5 6L12 1"/></svg>
<svg class="a" style="left:141.3px;top:895.2px;overflow:visible;" width="22.5" height="22.8" viewBox="0 0 22.5 22.8"><path fill="#adb7ba" d="M9.6 0H18.4V10.4H3.2V6.4Z"/><path fill="#ffffe4" d="M3.2 6.4L9.6 0V6.4Z"/><path fill="#c0c9cb" d="M4 5.6L8.8 0.8V5.6Z"/><rect x="0" y="12.3" width="22.5" height="10.5" fill="#7ccbe2"/><text x="5.3" y="21.6" text-anchor="middle" font-family="Liberation Sans,sans-serif" font-size="10.5" font-weight="700" fill="#2f4f5c">J</text></svg>
<svg class="a" style="left:44.6px;top:872px;overflow:visible;" width="18.4" height="18.2" viewBox="0 0 18.4 18.2"><g transform="scale(1)"><path fill="none" stroke="#6e6e6e" stroke-width="2.7" d="M1.9 7.6A7.7 7.7 0 0 1 16.6 6.2"/><path fill="none" stroke="#6e6e6e" stroke-width="2.7" d="M16.5 10.6A7.7 7.7 0 0 1 1.8 12"/><path fill="#6e6e6e" d="M0 0.4V7.6H7.2Z"/><path fill="#6e6e6e" d="M18.4 17.8V10.6H11.2Z"/></g></svg>
<svg class="a" style="left:45.4px;top:911px;overflow:visible;" width="19.6" height="16.4" viewBox="0 0 19.6 16.4"><g transform="scale(0.97,0.99)"><path fill="none" stroke="#59a869" stroke-width="3.3" d="M1.2 9L6.8 14.4L19 1.2"/></g></svg>
<svg class="a" style="left:45.6px;top:949.6px;overflow:visible;" width="18.8" height="18.4" viewBox="0 0 18.8 18.4"><g transform="scale(0.96)"><path fill="#bdbdbd" d="M0 5.6L6.8 0V11.2Z"/><path fill="none" stroke="#bdbdbd" stroke-width="2.6" d="M6 5.6H12.6A5.9 5.9 0 0 1 12.6 17.4H5.6"/></g></svg>
<svg class="a" style="left:43.6px;top:987.6px;overflow:visible;" width="21" height="20.8" viewBox="0 0 21 20.8"><g transform="scale(0.972,0.98)"><path fill="#bdbdbd" d="M8.4 6.2L15.4 0V4.9H21.6V7.5H15.4V12.4Z"/><path fill="#bdbdbd" d="M12.8 15.1L5.8 8.9V13.8H0V16.4H5.8V21.2Z"/></g></svg>
<svg class="a" style="left:45px;top:1028px;overflow:visible;" width="22.6" height="22" viewBox="0 0 22.6 22"><path fill="#5a5a5a" fill-rule="evenodd" d="M0 0H18V18H0ZM2.6 2.6V15.4H15.4V2.6Z"/><path stroke="#5a5a5a" stroke-width="1.5" d="M4.6 5.6H13.4M4.6 9H13.4M4.6 12.4H13.4"/><path fill="#222" d="M14.4 17.6H22.6L18.5 22Z"/></svg>
<svg class="a" style="left:43.6px;top:1067px;overflow:visible;" width="21" height="19.6" viewBox="0 0 21 19.6"><path fill="#bdbdbd" d="M9.1 0H11.9V7.6H16L10.5 13.6L5 7.6H9.1Z"/><path fill="none" stroke="#bdbdbd" stroke-width="2.6" d="M1.3 12.4V18.3H19.7V12.4"/></svg>
<svg class="a" style="left:42.2px;top:1103px;overflow:visible;" width="23.8" height="24" viewBox="0 0 23.8 24"><g fill="none" stroke="#bdbdbd" stroke-width="2"><rect x="13" y="1" width="9.6" height="8"/><rect x="1" y="5" width="6.6" height="6"/><rect x="15" y="16" width="7" height="7"/><circle cx="6" cy="17.6" r="2.6"/><path d="M7.6 8H13M11 9V19H15M8.6 17.6H11"/></g></svg>
<div class="a" style="left:39px;top:1139.4px;width:30px;height:1.6px;background:#c9c9c9;"></div>
<svg class="a" style="left:46.4px;top:1156px;overflow:visible;" width="21.4" height="22" viewBox="0 0 21.4 22"><rect x="0" y="0" width="6.4" height="6.4" fill="#6e6e6e"/><rect x="9" y="0" width="6.4" height="6.4" fill="#6e6e6e"/><rect x="0" y="9" width="6.4" height="6.4" fill="#6e6e6e"/><rect x="9" y="9" width="6.4" height="6.4" fill="#6e6e6e"/><path fill="#333" d="M13 17.2H21.4L17.2 21.8Z"/></svg>
<svg class="a" style="left:43.8px;top:1195.4px;overflow:visible;" width="24" height="22.2" viewBox="0 0 24 22.2"><path fill="#6e6e6e" d="M0 7.8Q5 0 10.4 0Q15.8 0 20.8 7.8Q15.8 15.4 10.4 15.4Q5 15.4 0 7.8Z"/><circle cx="10.4" cy="7.7" r="5" fill="#f2f2f2"/><circle cx="10.4" cy="7.7" r="2.7" fill="#6e6e6e"/><path fill="#333" d="M15.6 17.6H24L19.8 22.2Z"/></svg>
<svg class="a" style="left:45px;top:1231px;overflow:visible;" width="18" height="22" viewBox="0 0 18 22"><rect x="0" y="0" width="18" height="2.8" fill="#6e6e6e"/><rect x="0" y="19.2" width="18" height="2.8" fill="#6e6e6e"/><path fill="#6e6e6e" d="M4 9.6L9 5L14 9.6ZM4 12.4L9 17L14 12.4Z"/></svg>
<svg class="a" style="left:45px;top:1272px;overflow:visible;" width="18" height="18.6" viewBox="0 0 18 18.6"><rect x="0" y="8" width="18" height="2.8" fill="#6e6e6e"/><path fill="#6e6e6e" d="M4 0.4H14L9 5.4ZM4 18.6H14L9 13.6Z"/></svg>
<div class="a" style="left:39px;top:1305.4px;width:30px;height:1.6px;background:#c9c9c9;"></div>
<svg class="a" style="left:45px;top:1322px;overflow:visible;" width="18" height="20" viewBox="0 0 18 20"><rect width="18" height="20" fill="#6e6e6e"/><rect x="2.6" y="3.4" width="6.2" height="13.2" fill="#f2f2f2"/></svg>
<svg class="a" style="left:53.9px;top:1463.5px;overflow:visible;" width="15.3" height="17.3" viewBox="0 0 15.3 17.3"><path fill="#787878" d="M0 0H3V17.3H0Z"/><path fill="none" stroke="#787878" stroke-width="2.6" d="M3 10.8H10.4V5"/><path fill="#787878" d="M5.6 6.6L10.4 0.4L15.3 6.6Z"/></svg>
<svg class="a" style="left:259.4px;top:1463.4px;overflow:visible;" width="16.6" height="16" viewBox="0 0 16.6 16"><rect width="16.6" height="16" fill="#787878"/><path fill="none" stroke="#f2f2f2" stroke-width="1.6" d="M3 3.6L7.2 7.6L3 11.6M8.6 12.2H13.6"/></svg>
<svg class="a" style="left:388.4px;top:1465.2px;overflow:visible;" width="16.6" height="12.8" viewBox="0 0 16.6 12.8"><path fill="#787878" d="M0 0H16.6V3H0ZM0 5H11V8H0ZM0 10H13.6V12.8H0Z"/></svg>
<svg class="a" style="left:548.9px;top:1465.2px;overflow:visible;" width="14.9" height="12.8" viewBox="0 0 14.9 12.8"><path fill="#787878" d="M0 0H3.4V2.8H0ZM5.4 0H14.9V2.8H5.4ZM0 5H3.4V7.8H0ZM5.4 5H14.9V7.8H5.4ZM0 10H3.4V12.8H0ZM5.4 10H14.9V12.8H5.4Z"/></svg>
<svg class="a" style="left:2405.9px;top:1462px;overflow:visible;" width="19.1" height="20" viewBox="0 0 19.1 20"><path fill="#59a869" d="M9.6 0A9.6 9.8 0 0 1 19.1 9.8V19.6H9.6A9.6 9.8 0 0 1 9.6 0Z"/></svg>
<span class="t" style="left:2411.2px;top:1463.2px;font-size:14.5px;line-height:18px;font-weight:700;color:#fff">8</span>
<svg class="a" style="left:15px;top:1496px;overflow:visible;" width="18" height="18.2" viewBox="0 0 18 18.2"><rect x="3.6" y="0.7" width="13.6" height="13.6" fill="none" stroke="#6e6e6e" stroke-width="1.4"/><path fill="none" stroke="#6e6e6e" stroke-width="1.4" d="M0.7 3.6V17.4H14.4"/></svg>
<svg class="a" style="left:2127.6px;top:1497px;overflow:visible;" width="8.2" height="16" viewBox="0 0 8.2 16"><path fill="#555" d="M0 6.4L4.1 1L8.2 6.4ZM0 9.6L4.1 15L8.2 9.6Z"/></svg>
<svg class="a" style="left:2209.6px;top:1497px;overflow:visible;" width="8.2" height="16" viewBox="0 0 8.2 16"><path fill="#555" d="M0 6.4L4.1 1L8.2 6.4ZM0 9.6L4.1 15L8.2 9.6Z"/></svg>
<svg class="a" style="left:2317px;top:1497px;overflow:visible;" width="8.2" height="16" viewBox="0 0 8.2 16"><path fill="#555" d="M0 6.4L4.1 1L8.2 6.4ZM0 9.6L4.1 15L8.2 9.6Z"/></svg>
<svg class="a" style="left:2447px;top:1497px;overflow:visible;" width="8.2" height="16" viewBox="0 0 8.2 16"><path fill="#555" d="M0 6.4L4.1 1L8.2 6.4ZM0 9.6L4.1 15L8.2 9.6Z"/></svg>
<svg class="a" style="left:2473.6px;top:1497px;overflow:visible;" width="12.4" height="16" viewBox="0 0 12.4 16"><path fill="#6e6e6e" d="M0 16V4L6 10H12.4V16Z"/></svg>
<svg class="a" style="left:2535px;top:1495px;overflow:visible;" width="14" height="19" viewBox="0 0 14 19"><circle cx="7" cy="6.4" r="5.6" fill="none" stroke="#6e6e6e" stroke-width="1.6"/><path fill="#6e6e6e" d="M0.6 19Q0.6 12.6 7 12.6Q13.4 12.6 13.4 19Z"/><circle cx="7" cy="6.4" r="2.4" fill="#6e6e6e"/></svg>
<svg class="a" style="left:9.2px;top:211.5px;overflow:visible;" width="16.2" height="13.1" viewBox="0 0 16.2 13.1"><path fill="#6e6e6e" d="M0 0H5.02L7.94 2.49H16.2V13.1H0Z"/></svg>
<svg class="a" style="left:7.3px;top:1268px;overflow:visible;" width="19.4" height="18" viewBox="0 0 19.4 18"><path fill="#757575" d="M9.7 0L12.2 6.6L19.4 6.9L13.8 11.3L15.7 18L9.7 14.1L3.7 18L5.6 11.3L0 6.9L7.2 6.6Z"/></svg>
<svg class="a" style="left:10.3px;top:1420.6px;overflow:visible;" width="13.9" height="13.4" viewBox="0 0 13.9 13.4"><path fill="#7a7a7a" d="M7.9 0H13.9V5.6H7.9ZM0 7.4H6V13.4H0ZM7.9 7.4H13.9V13.4H7.9Z"/></svg>
<svg class="a" style="left:2536.4px;top:127.2px;overflow:visible;" width="16.6" height="18.2" viewBox="0 0 16.6 18.2"><ellipse cx="8.3" cy="3.4" rx="8.3" ry="3.4" fill="#787878"/><path fill="#787878" d="M0 5.6Q8.3 10.6 16.6 5.6V8.8Q8.3 13.8 0 8.8ZM0 10.2Q8.3 15.2 16.6 10.2V13.4Q8.3 18.4 0 13.4ZM0 14.8Q8.3 19.8 16.6 14.8V15.6Q8.3 20.6 0 15.6Z"/></svg>
<span class="t" style="left:2534.2px;top:250.6px;font-size:26px;line-height:30px;font-style:italic;font-weight:700;color:#787878;transform-origin:0 50%;transform:scaleX(0.86)">m</span>
<svg class="a" style="left:2536.5px;top:370.8px;overflow:visible;" width="15.5" height="18" viewBox="0 0 15.5 18"><g stroke="#787878" stroke-width="1.3" fill="none"><path d="M2 1L6 5M13.5 1L9.5 5M0.6 7.6L6 9M15 7.6L9.6 9M1 16.6L6 11.6M14.6 16.6L9.6 11.6"/></g><circle cx="7.8" cy="4.6" r="2.4" fill="#787878"/><ellipse cx="7.8" cy="9" rx="2.2" ry="2.4" fill="#787878"/><ellipse cx="7.8" cy="14.2" rx="3.6" ry="3.8" fill="#787878"/></svg>
<div class="a" style="left:1206px;top:1476px;width:242px;height:38px;background:#fff;border:1px solid #b9cde8;border-radius:4px;box-sizing:border-box"></div>
<div class="a" style="left:1374px;top:1477px;width:36px;height:36px;background:linear-gradient(135deg,#f3eefc,#fff 45%,#fff7dc)"></div>
<svg class="a" style="left:1181px;top:1469px;overflow:visible;" width="48" height="47" viewBox="0 0 48 47"><path fill="#f2581f" d="M4.5 8.6L38 1Q41.4 0.4 42.2 3.6L47.4 36Q47.8 39.4 44.6 40.2L12 46.6Q8.6 47 7.8 44L0.6 12.6Q0 9.6 4.5 8.6Z"/><text x="24" y="37" text-anchor="middle" font-family="Liberation Sans,sans-serif" font-size="39" font-weight="700" fill="#fff" transform="rotate(-12 24 24) translate(24 0) scale(1.22 1) translate(-24 0)">S</text></svg>
<span class="t" style="left:1236.6px;top:1483px;font-size:22px;line-height:26px;font-weight:700;color:#0c6cdc">英</span>
<svg class="a" style="left:1276px;top:1486px;overflow:visible;" width="18" height="18" viewBox="0 0 18 18"><circle cx="3.2" cy="3.4" r="2.1" fill="#0c6cdc"/><path fill="#0c6cdc" d="M11 8.6Q14.6 8.2 14.8 11.4Q14.8 15.4 10.6 17.4L9.8 16Q12.2 14.6 12 12.8Q9.4 12.6 9.4 10.6Q9.4 8.8 11 8.6Z"/></svg>
<svg class="a" style="left:1311.5px;top:1483px;overflow:visible;" width="18.5" height="27" viewBox="0 0 18.5 27"><rect x="5" y="0.6" width="8.4" height="15.4" rx="4.2" fill="#0c6cdc"/><path fill="none" stroke="#0c6cdc" stroke-width="2" d="M1 11.2Q1 19.6 9.2 19.6Q17.4 19.6 17.4 11.2M9.2 19.6V24"/><rect x="5.6" y="23.4" width="7.2" height="2" rx="1" fill="#0c6cdc"/></svg>
<svg class="a" style="left:1346px;top:1486.6px;overflow:visible;" width="22.6" height="17.8" viewBox="0 0 22.6 17.8"><rect x="0" y="0" width="22.6" height="17.8" rx="2.6" fill="#0c6cdc"/><path fill="#fff" d="M3 3H6V6H3ZM7.4 3H10.4V6H7.4ZM11.8 3H14.8V6H11.8ZM16.2 3H19.6V6H16.2ZM3 7.4H6V10.4H3ZM7.4 7.4H10.4V10.4H7.4ZM11.8 7.4H14.8V10.4H11.8ZM16.2 7.4H19.6V10.4H16.2ZM3 11.8H6V14.8H3ZM7.4 11.8H15V14.8H7.4ZM16.2 11.8H19.6V14.8H16.2Z"/></svg>
<svg class="a" style="left:1381.4px;top:1485px;overflow:visible;" width="22.6" height="23" viewBox="0 0 22.6 23"><path fill="#0c6cdc" d="M0 4.6L6.6 0.4Q11.3 4.4 16 0.4L22.6 4.6L19.6 10.4L17.4 9.2V20.4Q17.4 22.4 15.4 22.4H7.2Q5.2 22.4 5.2 20.4V9.2L3 10.4Z"/></svg>
<svg class="a" style="left:1419.6px;top:1486px;overflow:visible;" width="19.8" height="19.6" viewBox="0 0 19.8 19.6"><rect x="0" y="0" width="8.6" height="8.6" rx="2.6" fill="#0c6cdc"/><rect x="11.2" y="0" width="8.6" height="8.6" rx="4.3" fill="#0c6cdc"/><rect x="0" y="11" width="8.6" height="8.6" rx="2.6" fill="#0c6cdc"/><rect x="11.2" y="11" width="8.6" height="8.6" rx="2.6" fill="#0c6cdc"/></svg>
<span class="t" id="wm" style="left:2408.6px;top:1491.5px;font-size:17px;line-height:22px;color:rgba(120,120,120,0.72);text-shadow:0 0 1.2px #fff,0 0 1.2px #fff;transform-origin:0 0;transform:scaleX(0.9)">CSDN @</span>
<span class="t" id="wm2" style="left:2473.4px;top:1489.4px;font-size:17.4px;line-height:28px;letter-spacing:1.4px;color:rgba(120,120,120,0.72);text-shadow:0 0 1.2px #fff,0 0 1.2px #fff">传智教育</span>
</body></html>
